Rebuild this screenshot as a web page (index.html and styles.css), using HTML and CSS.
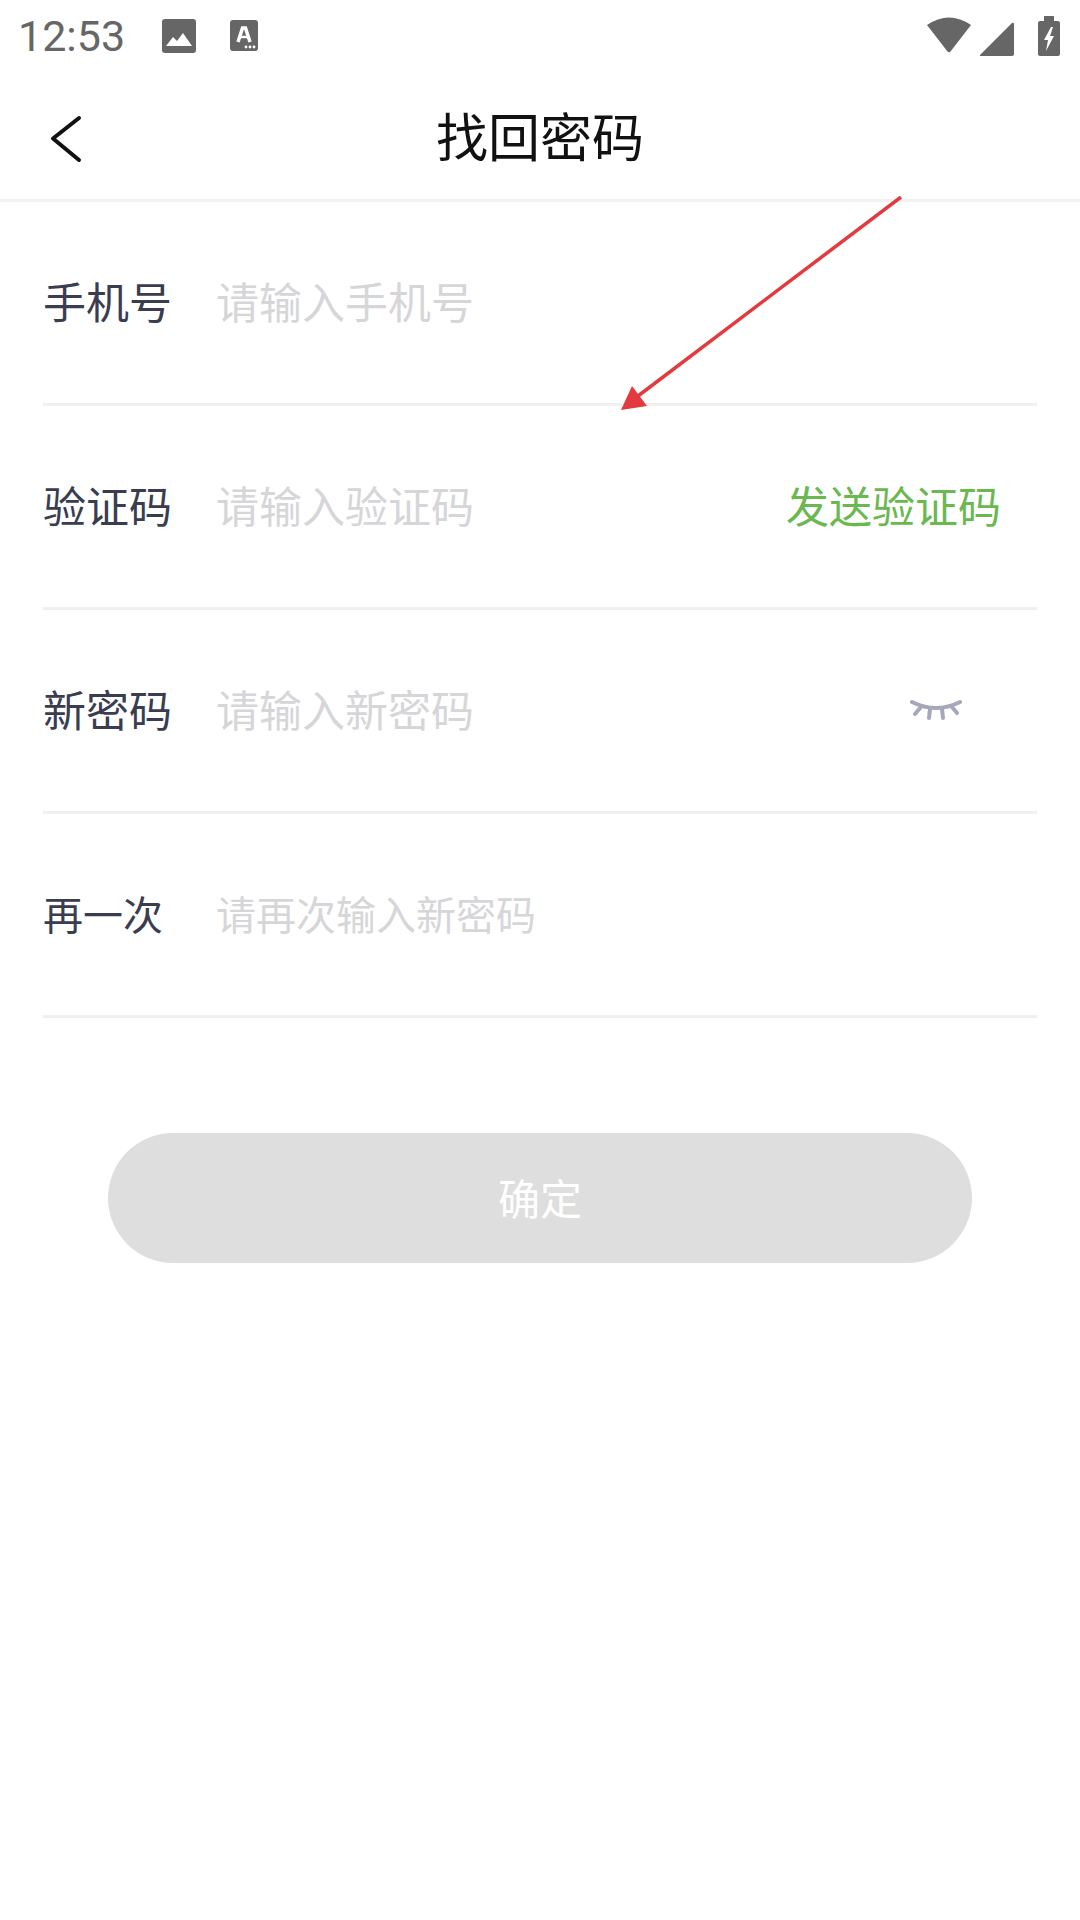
FILE: index.html
```html
<!DOCTYPE html>
<html lang="zh-CN">
  <head>
    <meta charset="UTF-8" />
    <meta name="viewport" content="width=device-width, initial-scale=1.0" />
    <title>找回密码</title>
    <link rel="stylesheet" href="styles.css">
  </head>
  <body>
    <div class="page">
      <div class="status-bar">
        <span class="clock">12:53</span>
        <svg class="icon-photo" width="36" height="36" viewBox="0 0 36 36">
          <rect x="1" y="1" width="34" height="34" rx="3" fill="#666"/>
          <path d="M5 28 L12 19 L16 23 L22 15 L31 28 Z" fill="#fff"/>
        </svg>
        <svg class="icon-a" width="28" height="32" viewBox="0 0 28 32">
          <rect x="0" y="0" width="28" height="31" rx="3" fill="#666"/>
          <path d="M8 22 L12.5 8 H15.5 L20 22" fill="none" stroke="#fff" stroke-width="3.5"/>
          <path d="M10 17 H18" stroke="#fff" stroke-width="2.5"/>
          <circle cx="16" cy="27" r="1.4" fill="#fff"/>
          <circle cx="20" cy="27" r="1.4" fill="#fff"/>
          <circle cx="24" cy="27" r="1.4" fill="#fff"/>
        </svg>
        <span class="status-right">
          <svg class="icon-wifi" width="46" height="38" viewBox="0 0 46 38">
            <path d="M1 9 Q23 -6 45 9 L24.5 35.5 Q23 37 21.5 35.5 Z" fill="#666"/>
          </svg>
          <svg class="icon-signal" width="35" height="35" viewBox="0 0 35 35">
            <path d="M1 34 L33 2 Q35 1 35 3 V33 Q35 35 33 35 H2 Q0 35 1 34 Z" fill="#666"/>
          </svg>
          <svg class="icon-battery" width="22" height="40" viewBox="0 0 22 40">
            <path d="M6 0 H16 V5 H20 Q22 5 22 7 V38 Q22 40 20 40 H2 Q0 40 0 38 V7 Q0 5 2 5 H6 Z" fill="#666"/>
            <path d="M13 11 L6 24 H10 L8 35 L16 20 H12 L15 11 Z" fill="#fff"/>
          </svg>
        </span>
      </div>

      <div class="title-bar">
        <svg class="back" width="34" height="50" viewBox="0 0 34 50">
          <path d="M30 3 L4 23.5 L30 45" fill="none" stroke="#111" stroke-width="4" stroke-linecap="round" stroke-linejoin="round"/>
        </svg>
        <h1>找回密码</h1>
      </div>

      <div class="form">
        <div class="row">
          <span class="label">手机号</span>
          <span class="hint">请输入手机号</span>
        </div>
        <div class="row">
          <span class="label">验证码</span>
          <span class="hint">请输入验证码</span>
          <span class="send">发送验证码</span>
        </div>
        <div class="row">
          <span class="label">新密码</span>
          <span class="hint">请输入新密码</span>
          <svg class="eye" width="52" height="24" viewBox="0 0 52 24">
            <path d="M2 4 Q26 16 50 4" fill="none" stroke="#a4a8ba" stroke-width="4" stroke-linecap="round"/>
            <path d="M11 9 L5 16 M20 11 L19 20 M32 11 L33 20 M42 9 L47 15" fill="none" stroke="#a4a8ba" stroke-width="4" stroke-linecap="round"/>
          </svg>
        </div>
        <div class="row row-small">
          <span class="label">再一次</span>
          <span class="hint">请再次输入新密码</span>
        </div>
      </div>

      <button class="submit">确定</button>

      <svg class="arrow" width="300" height="220" viewBox="0 0 300 220">
        <path d="M281 1 L18 200" stroke="#e23a3e" stroke-width="3.5" fill="none"/>
        <path d="M1 214 L12 190 L27 210 Z" fill="#e23a3e"/>
      </svg>
    </div>
  </body>
</html>
```

FILE: styles.css
```css
body {
  margin: 0;
  background: #fff;
  font-family: "Noto Sans CJK SC", Roboto, sans-serif;
}

.page {
  position: relative;
  width: 1080px;
  height: 1920px;
  overflow: hidden;
}

.status-bar {
  display: flex;
  align-items: center;
  height: 72px;
  padding: 0 20px 0 18px;
  color: #666;
}

.clock {
  font-family: Roboto, sans-serif;
  font-size: 43px;
  width: 143px;
}

.icon-a {
  margin-left: 33px;
}

.status-right {
  margin-left: auto;
  display: flex;
  align-items: flex-end;
}

.icon-wifi {
  margin-bottom: 2px;
}

.icon-signal {
  margin-left: 7px;
}

.icon-battery {
  margin-left: 24px;
}

.title-bar {
  position: relative;
  box-sizing: border-box;
  height: 130px;
  padding-bottom: 2px;
  border-bottom: 3px solid #f2f2f2;
  display: flex;
  align-items: center;
  justify-content: center;
}

.title-bar h1 {
  margin: 0;
  font-size: 52px;
  font-weight: 400;
  color: #111;
}

.back {
  position: absolute;
  left: 49px;
  top: 43px;
}

.form {
  margin: 0 43px;
}

.row {
  display: flex;
  align-items: center;
  box-sizing: border-box;
  height: 204px;
  padding-bottom: 5px;
  border-bottom: 3px solid #f0f0f0;
  font-size: 43px;
}

.row-small {
  padding-bottom: 3px;
  font-size: 40px;
}

.label {
  width: 173px;
  color: #3a3d50;
}

.hint {
  color: #d6d6d8;
}

.send {
  margin-left: auto;
  margin-right: 36px;
  color: #6ab84f;
}

.eye {
  margin-left: auto;
  margin-right: 75px;
  margin-top: 3px;
}

.submit {
  display: block;
  width: 864px;
  height: 130px;
  margin: 115px auto 0;
  padding: 0 0 3px;
  border: none;
  border-radius: 65px;
  background: #dedede;
  color: #fff;
  font-family: inherit;
  font-size: 42px;
}

.arrow {
  position: absolute;
  left: 620px;
  top: 196px;
}
```
